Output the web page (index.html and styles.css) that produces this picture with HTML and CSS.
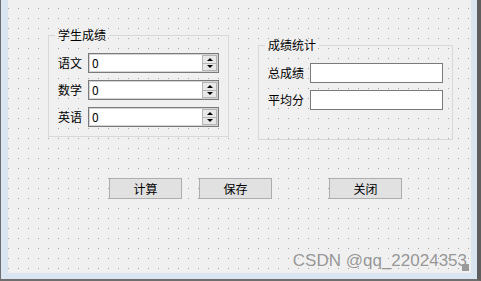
FILE: index.html
```html
<!DOCTYPE html>
<html lang="zh-CN">
<head>
  <meta charset="UTF-8">
  <title>学生成绩</title>
  <link rel="stylesheet" href="styles.css">
</head>
<body>
  <div class="window">
    <div class="client">
      <div class="groups">
        <fieldset class="group scores">
          <legend>学生成绩</legend>
          <div class="form-grid">
            <label>语文</label>
            <div class="spin">
              <span class="spin-value">0</span>
              <div class="spin-btns">
                <span class="spin-btn"><i class="arrow-up"></i></span>
                <span class="spin-btn"><i class="arrow-down"></i></span>
              </div>
            </div>
            <label>数学</label>
            <div class="spin">
              <span class="spin-value">0</span>
              <div class="spin-btns">
                <span class="spin-btn"><i class="arrow-up"></i></span>
                <span class="spin-btn"><i class="arrow-down"></i></span>
              </div>
            </div>
            <label>英语</label>
            <div class="spin">
              <span class="spin-value">0</span>
              <div class="spin-btns">
                <span class="spin-btn"><i class="arrow-up"></i></span>
                <span class="spin-btn"><i class="arrow-down"></i></span>
              </div>
            </div>
          </div>
        </fieldset>

        <fieldset class="group stats">
          <legend>成绩统计</legend>
          <div class="form-grid">
            <label>总成绩</label>
            <div class="line-edit"></div>
            <label>平均分</label>
            <div class="line-edit"></div>
          </div>
        </fieldset>
      </div>

      <div class="actions">
        <button class="btn">计算</button>
        <button class="btn save">保存</button>
        <button class="btn close">关闭</button>
      </div>

      <div class="watermark">CSDN @qq_22024353</div>
      <div class="grip"></div>
    </div>
  </div>
</body>
</html>
```

FILE: styles.css
```css
* {
  margin: 0;
  padding: 0;
  box-sizing: border-box;
}

body {
  font-family: "Noto Sans CJK SC", "Liberation Sans", sans-serif;
  font-size: 12px;
  color: #000;
  background: #f0f0f0;
}

.window {
  display: flex;
  width: 481px;
  height: 281px;
  background: #dae5f2;
  border-left: 1px solid #6e6e6e;
  border-right: 4px solid #5e5e5e;
  border-bottom: 2px solid #6e6e6e;
  padding: 0 6px 6px 7px;
}

.client {
  flex: 1;
  position: relative;
  display: flex;
  flex-direction: column;
  padding: 28px 0 0 40px;
  background-color: #f0f0f0;
  background-image: url("data:image/svg+xml,<svg xmlns='http://www.w3.org/2000/svg' width='10' height='10'><rect width='1' height='1' fill='%23a3a3a3'/></svg>");
  background-position: 0 8px;
}

.groups {
  display: flex;
  align-items: flex-start;
  gap: 29px;
}

.group {
  border: 1px solid #d8d8d8;
  padding: 11px 9px 9px;
  min-width: 0;
}

.group legend {
  line-height: 14px;
  padding: 0 3px;
  margin-left: -3px;
}

.stats {
  margin-top: 10px;
  padding-bottom: 29px;
}

.form-grid {
  display: grid;
  grid-template-columns: auto 131px;
  column-gap: 6px;
  row-gap: 7px;
  align-items: center;
}

.stats .form-grid {
  grid-template-columns: auto 133px;
}

.form-grid label {
  line-height: 14px;
}

.spin {
  display: flex;
  height: 20px;
  background: #fff;
  border: 1px solid #7a7a7a;
  box-shadow: inset 0 0 0 1px #d4d4d4;
}

.spin-value {
  flex: 1;
  padding-left: 3px;
  line-height: 18px;
}

.spin-btns {
  display: flex;
  flex-direction: column;
  width: 15px;
  margin: 1px 1px 1px 0;
}

.spin-btn {
  flex: 1;
  display: flex;
  align-items: center;
  justify-content: center;
  background: #e8e8e8;
  border: 1px solid #b4b4b4;
}

.spin-btn + .spin-btn {
  border-top: none;
}

.arrow-up,
.arrow-down {
  width: 0;
  height: 0;
  border-left: 3px solid transparent;
  border-right: 3px solid transparent;
}

.arrow-up {
  border-bottom: 3px solid #000;
}

.arrow-down {
  border-top: 3px solid #000;
}

.line-edit {
  height: 20px;
  background: #fff;
  border: 1px solid #7a7a7a;
}

.actions {
  display: flex;
  margin-top: 38px;
  padding-left: 61px;
}

.btn {
  width: 73px;
  height: 21px;
  background: #e1e1e1;
  border: 1px solid #adadad;
  font-family: "Noto Sans CJK SC", sans-serif;
  font-size: 12px;
  color: #000;
}

.save {
  margin-left: 17px;
}

.close {
  margin-left: 57px;
}

.watermark {
  position: absolute;
  right: 4px;
  bottom: 2px;
  font-family: "Liberation Sans", sans-serif;
  font-size: 17px;
  color: rgba(120, 120, 120, 0.75);
}

.grip {
  position: absolute;
  right: 2px;
  bottom: 2px;
  width: 7px;
  height: 7px;
  background-image: radial-gradient(circle, #9a9a9a 0.8px, transparent 1px);
  background-size: 2px 2px;
}
```
